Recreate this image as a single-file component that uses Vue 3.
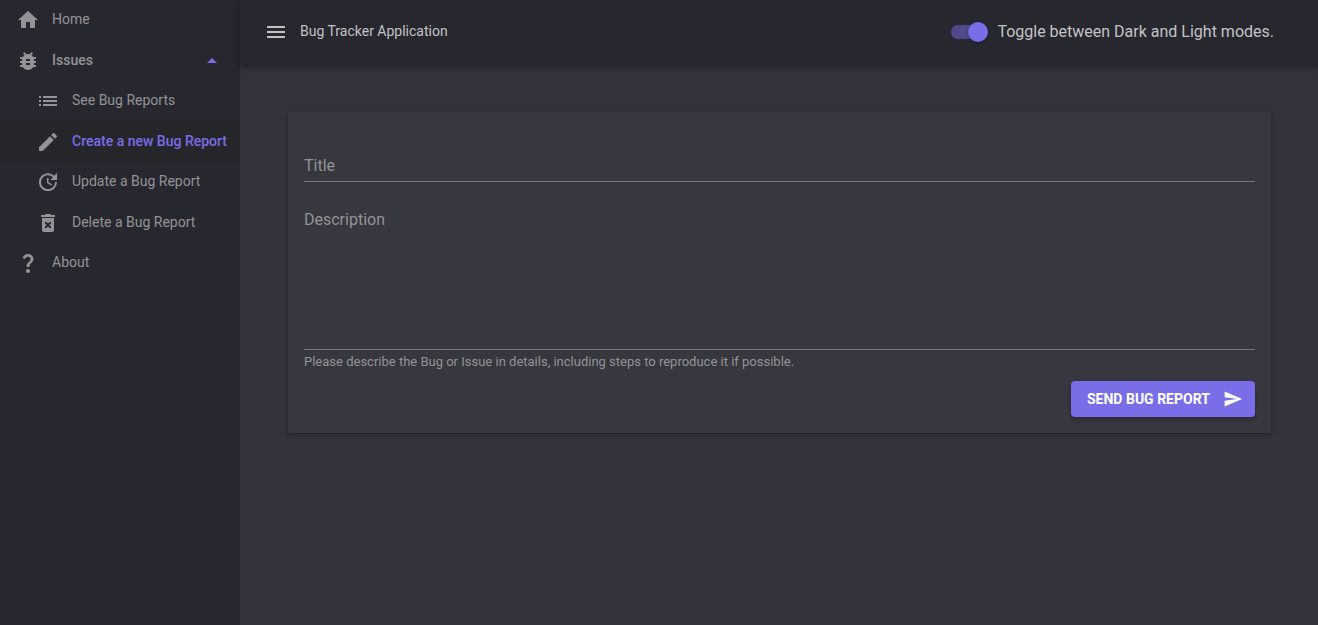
<script setup>
import { ref } from 'vue'

const icons = {
  home: 'M10 20v-6h4v6h5v-8h3L12 3 2 12h3v8z',
  bug: 'M20 8h-2.81c-.45-.78-1.07-1.45-1.82-1.96L17 4.41 15.59 3l-2.17 2.17C12.96 5.06 12.49 5 12 5c-.49 0-.96.06-1.41.17L8.41 3 7 4.41l1.62 1.63C7.88 6.55 7.26 7.22 6.81 8H4v2h2.09c-.05.33-.09.66-.09 1v1H4v2h2v1c0 .34.04.67.09 1H4v2h2.81c1.04 1.79 2.97 3 5.19 3s4.15-1.21 5.19-3H20v-2h-2.09c.05-.33.09-.66.09-1v-1h2v-2h-2v-1c0-.34-.04-.67-.09-1H20V8zm-6 8h-4v-2h4v2zm0-4h-4v-2h4v2z',
  list: 'M3 13h2v-2H3v2zm0 4h2v-2H3v2zm0-8h2V7H3v2zm4 4h14v-2H7v2zm0 4h14v-2H7v2zM7 7v2h14V7H7z',
  edit: 'M3 17.25V21h3.75L17.81 9.94l-3.75-3.75L3 17.25zM20.71 7.04c.39-.39.39-1.02 0-1.41l-2.34-2.34a.9959.9959 0 0 0-1.41 0l-1.83 1.83 3.75 3.75 1.83-1.83z',
  update: 'M21 10.12h-6.78l2.74-2.82c-2.73-2.7-7.15-2.8-9.88-.1-2.73 2.71-2.73 7.08 0 9.79s7.15 2.71 9.88 0C18.32 15.65 19 14.08 19 12.1h2c0 1.98-.88 4.55-2.64 6.29-3.51 3.48-9.21 3.48-12.72 0-3.5-3.47-3.53-9.11-.02-12.58s9.14-3.47 12.65 0L21 3v7.12zM12.5 8v4.25l3.5 2.08-.72 1.21L11 13V8h1.5z',
  remove: 'M6 19c0 1.1.9 2 2 2h8c1.1 0 2-.9 2-2V7H6v12zm2.46-7.12l1.41-1.41L12 12.59l2.12-2.12 1.41 1.41L13.41 14l2.12 2.12-1.41 1.41L12 15.41l-2.12 2.12-1.41-1.41L10.59 14l-2.13-2.12zM15.5 4l-1-1h-5l-1 1H5v2h14V4z',
  question: 'M11.07 12.85c.77-1.39 2.25-2.21 3.11-3.44.91-1.29.4-3.7-2.18-3.7-1.69 0-2.52 1.28-2.87 2.34L6.54 6.96C7.25 4.83 9.18 3 11.99 3c2.35 0 3.96 1.07 4.78 2.41.7 1.15 1.11 3.3.03 4.9-1.2 1.77-2.35 2.31-2.97 3.45-.25.46-.35.76-.35 2.24h-2.89c-.01-.78-.13-2.05.48-3.15zM14 20c0 1.1-.9 2-2 2s-2-.9-2-2 .9-2 2-2 2 .9 2 2z',
}

const issueLinks = [
  { label: 'See Bug Reports', icon: 'list', href: '#list' },
  { label: 'Create a new Bug Report', icon: 'edit', href: '#create', active: true },
  { label: 'Update a Bug Report', icon: 'update', href: '#update' },
  { label: 'Delete a Bug Report', icon: 'remove', href: '#delete' },
]

const menuOpen = ref(true)
const issuesOpen = ref(true)
const dark = ref(true)
const title = ref('')
const description = ref('')
</script>

<template>
  <div class="layout">
    <nav v-show="menuOpen" class="sidebar" aria-label="Main">
      <a class="item" href="#home">
        <svg class="icon" viewBox="0 0 24 24"><path :d="icons.home" /></svg>
        <span class="text">Home</span>
      </a>
      <button class="item group" type="button" :aria-expanded="issuesOpen" @click="issuesOpen = !issuesOpen">
        <svg class="icon" viewBox="0 0 24 24"><path :d="icons.bug" /></svg>
        <span class="text">Issues</span>
        <svg class="icon arrow" viewBox="0 0 24 24"><path d="m7 14 5-5 5 5z" /></svg>
      </button>
      <div v-show="issuesOpen">
        <a
          v-for="link in issueLinks"
          :key="link.label"
          class="item sub"
          :class="{ active: link.active }"
          :href="link.href"
        >
          <svg class="icon" viewBox="0 0 24 24"><path :d="icons[link.icon]" /></svg>
          <span class="text">{{ link.label }}</span>
        </a>
      </div>
      <a class="item" href="#about">
        <svg class="icon" viewBox="0 0 24 24"><path :d="icons.question" /></svg>
        <span class="text">About</span>
      </a>
    </nav>

    <div class="page">
      <header class="bar">
        <button class="menu" type="button" aria-label="Toggle menu" @click="menuOpen = !menuOpen">
          <svg class="icon" viewBox="0 0 24 24"><path d="M3 18h18v-2H3v2zm0-5h18v-2H3v2zm0-7v2h18V6H3z" /></svg>
        </button>
        <h1 class="brand">Bug Tracker Application</h1>
        <label class="toggle">
          <input v-model="dark" class="switch" type="checkbox" role="switch" />
          <span>Toggle between Dark and Light modes.</span>
        </label>
      </header>

      <main class="content">
        <form class="card" @submit.prevent>
          <div class="field">
            <input id="title" v-model="title" class="control" type="text" />
            <label v-show="!title" class="label" for="title">Title</label>
          </div>
          <div class="field">
            <textarea id="description" v-model="description" class="control area" aria-describedby="hint"></textarea>
            <label v-show="!description" class="label" for="description">Description</label>
          </div>
          <p id="hint" class="hint">
            Please describe the Bug or Issue in details, including steps to reproduce it if possible.
          </p>
          <button class="send" type="submit">
            <span>SEND BUG REPORT</span>
            <svg class="plane" viewBox="0 0 24 24"><path d="M2.01 21L23 12 2.01 3 2 10l15 2-15 2z" /></svg>
          </button>
        </form>
      </main>
    </div>
  </div>
</template>

<style>
body {
  margin: 0;
  background: #33333c;
}
</style>

<style scoped>
.layout {
  display: flex;
  min-height: 100vh;
  font-family: Roboto, "Liberation Sans", sans-serif;
  background: #33333c;
  color: #c3c3c5;
}

.layout * {
  box-sizing: border-box;
}

.icon {
  flex: none;
  width: 24px;
  height: 24px;
  fill: currentColor;
}

.sidebar {
  flex: none;
  width: 240px;
  background: #27272f;
}

.item {
  display: flex;
  align-items: center;
  width: 100%;
  height: 40px;
  padding: 0 16px;
  gap: 12px;
  border: 0;
  background: none;
  color: #939397;
  font: 400 14px/20px Roboto, "Liberation Sans", sans-serif;
  text-align: left;
  text-decoration: none;
  white-space: nowrap;
  cursor: pointer;
}

.item .text {
  padding-bottom: 2px;
}

.group {
  height: 41px;
  font-weight: 500;
}

.arrow {
  margin-left: auto;
  color: #796de8;
}

.sub {
  padding: 0 12px 0 36px;
}

.sub:nth-child(even) {
  height: 41px;
}

.active {
  background: #25262a;
  font-weight: 500;
}

.active .text {
  color: #796de8;
}

.page {
  flex: 1;
  min-width: 0;
}

.bar {
  position: relative;
  display: flex;
  align-items: center;
  height: 65px;
  padding: 0 44px 2px 24px;
  background: #27272f;
  box-shadow: 0 2px 4px -1px rgba(0, 0, 0, 0.2), 0 4px 5px rgba(0, 0, 0, 0.14), 0 1px 10px rgba(0, 0, 0, 0.12);
}

.menu {
  display: flex;
  padding: 0;
  border: 0;
  background: none;
  color: inherit;
  cursor: pointer;
}

.brand {
  margin: 0 auto 0 12px;
  padding-bottom: 2px;
  font-size: 14px;
  font-weight: 400;
  line-height: 20px;
}

.toggle {
  display: flex;
  align-items: center;
  gap: 10px;
  font-size: 16px;
  line-height: 24px;
  cursor: pointer;
}

.switch {
  display: flex;
  align-items: center;
  appearance: none;
  width: 36px;
  height: 14px;
  margin: 0;
  border-radius: 7px;
  background: #50498b;
  cursor: pointer;
}

.switch::before {
  content: "";
  flex: none;
  width: 20px;
  height: 20px;
  border-radius: 50%;
  background: #796de8;
  box-shadow: 0 1px 3px rgba(0, 0, 0, 0.3);
}

.switch:checked::before {
  margin-left: 17px;
}

.content {
  padding: 47px 47px 48px 48px;
}

.card {
  display: flex;
  flex-direction: column;
  padding: 28px 16px 16px;
  background: #37373f;
  box-shadow: 0 2px 4px rgba(0, 0, 0, 0.2), 0 1px 5px rgba(0, 0, 0, 0.14);
}

.field {
  display: grid;
  margin-bottom: 24px;
}

.control,
.label {
  grid-area: 1 / 1;
}

.control {
  width: 100%;
  height: 42px;
  padding: 12px 0 4px;
  border: 0;
  border-bottom: 1px solid #77777a;
  outline: 0;
  background: none;
  color: #c3c3c5;
  font: 400 16px/24px Roboto, "Liberation Sans", sans-serif;
  resize: none;
}

.area {
  height: 144px;
  padding-top: 0;
}

.label {
  align-self: start;
  justify-self: start;
  padding-top: 14px;
  color: #939397;
  font-size: 16px;
  line-height: 24px;
  pointer-events: none;
}

.area + .label {
  padding-top: 2px;
}

.field + .hint {
  margin: -20px 0 0;
}

.hint {
  color: #939397;
  font-size: 13px;
  font-weight: 400;
  line-height: 16px;
}

.send {
  display: flex;
  align-items: center;
  justify-content: space-between;
  align-self: flex-end;
  min-width: 184px;
  height: 36px;
  margin-top: 11px;
  padding: 0 12px 0 16px;
  gap: 8px;
  border: 0;
  border-radius: 4px;
  background: #796de8;
  color: #fff;
  font: 700 14px/20px Roboto, "Liberation Sans", sans-serif;
  box-shadow: 0 2px 4px rgba(0, 0, 0, 0.3);
  cursor: pointer;
}

.plane {
  width: 20px;
  height: 20px;
  fill: currentColor;
}
</style>
